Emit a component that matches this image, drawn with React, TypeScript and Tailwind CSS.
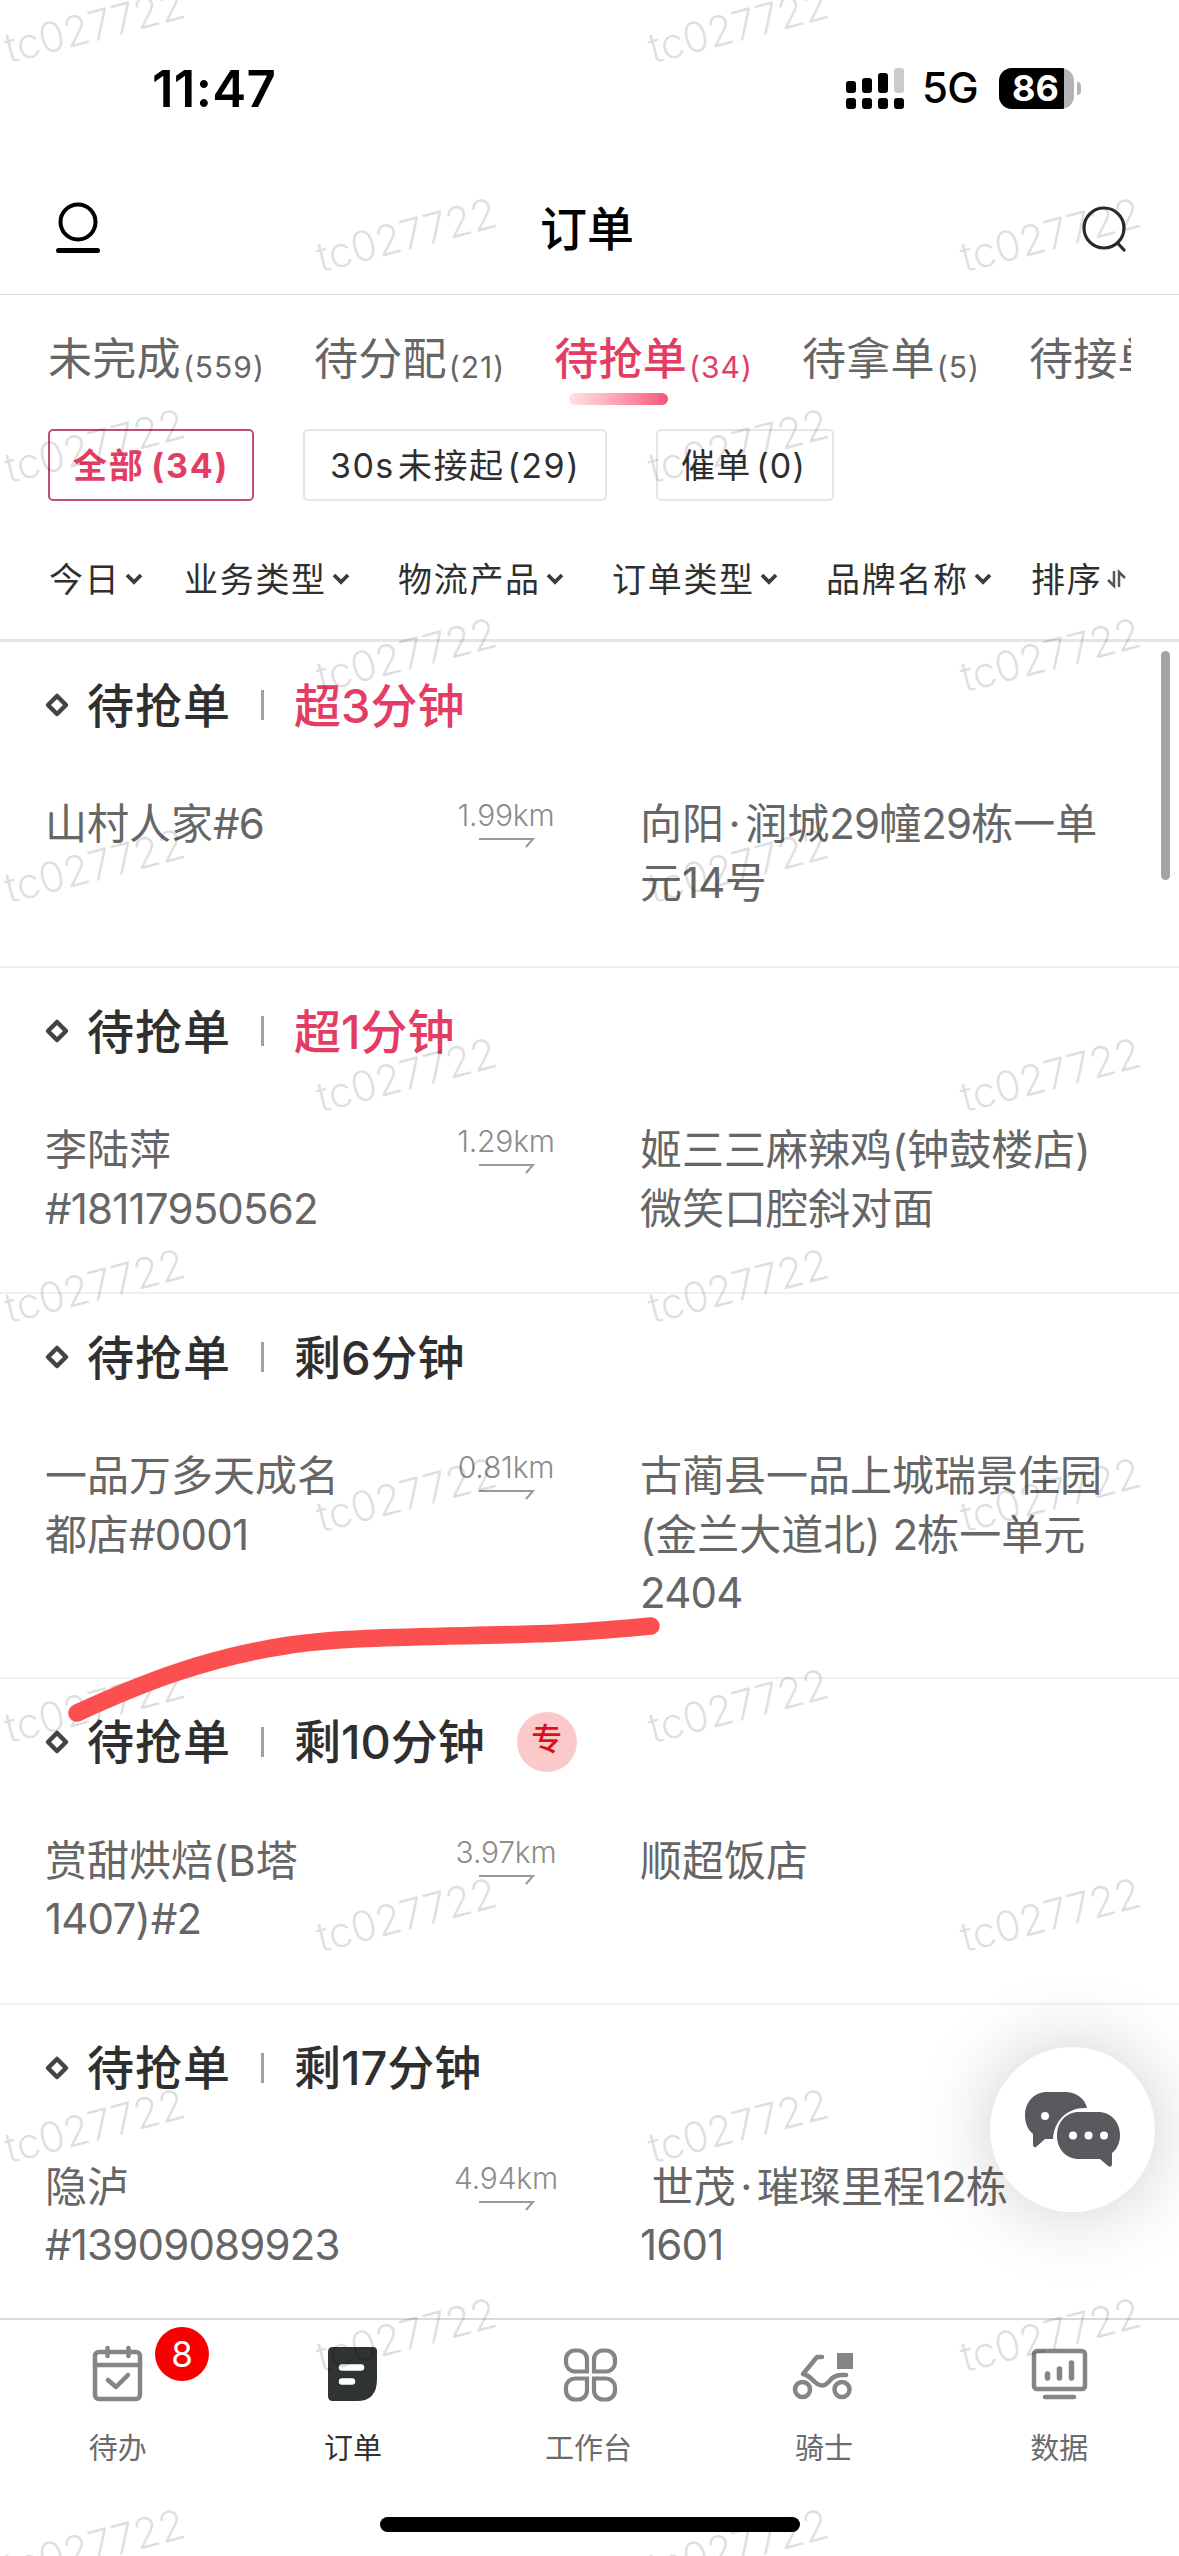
import type { ReactNode } from "react";

interface Order {
  id: number;
  time: string;
  late?: boolean;
  exclusive?: boolean;
  shop: string[];
  distance: string;
  address: string[];
}

const tabs = [
  { label: "未完成", count: 559 },
  { label: "待分配", count: 21 },
  { label: "待抢单", count: 34, active: true },
  { label: "待拿单", count: 5 },
  { label: "待接单" },
];

const filters = ["今日", "业务类型", "物流产品", "订单类型", "品牌名称"];

const orders: Order[] = [
  {
    id: 1,
    time: "超3分钟",
    late: true,
    shop: ["山村人家#6"],
    distance: "1.99km",
    address: ["向阳·润城29幢29栋一单", "元14号"],
  },
  {
    id: 2,
    time: "超1分钟",
    late: true,
    shop: ["李陆萍", "#18117950562"],
    distance: "1.29km",
    address: ["姬三三麻辣鸡(钟鼓楼店)", "微笑口腔斜对面"],
  },
  {
    id: 3,
    time: "剩6分钟",
    shop: ["一品万多天成名", "都店#0001"],
    distance: "0.81km",
    address: ["古蔺县一品上城瑞景佳园", "(金兰大道北) 2栋一单元", "2404"],
  },
  {
    id: 4,
    time: "剩10分钟",
    exclusive: true,
    shop: ["赏甜烘焙(B塔", "1407)#2"],
    distance: "3.97km",
    address: ["顺超饭店"],
  },
  {
    id: 5,
    time: "剩17分钟",
    shop: ["隐泸", "#13909089923"],
    distance: "4.94km",
    address: [" 世茂·璀璨里程12栋", "1601"],
  },
];

const watermarkRows = [0, 1, 2, 3, 4, 5, 6];

export default function App() {
  return (
    <div className="relative flex h-[2556px] w-[1179px] flex-col overflow-hidden bg-white font-['Inter','Noto_Sans_CJK_SC',sans-serif] text-[#2f2f2f]">
      <StatusBar />
      <Header />
      <Tabs />
      <Chips />
      <Filters />
      <main className="relative min-h-0 flex-1 overflow-hidden">
        {orders.map((order) => (
          <OrderCard key={order.id} order={order} />
        ))}
        <div className="absolute top-[9px] right-[9px] h-[229px] w-[9px] rounded-full bg-[#a3a3a3]" />
      </main>
      <BottomNav />
      <Watermark />
      <PenStroke />
      <ChatButton />
    </div>
  );
}

function StatusBar() {
  return (
    <div className="flex h-[176px] shrink-0 items-center justify-between pr-[98px] pl-[152px] text-black">
      <span className="text-[51px] leading-none font-semibold tracking-[0.3px]">11:47</span>
      <div className="flex items-center">
        <svg width="58" height="41" viewBox="0 0 58 41">
          <rect x="0" y="13" width="10" height="12" rx="3" />
          <rect x="16" y="10" width="10" height="15" rx="3" />
          <rect x="32" y="5" width="10" height="20" rx="3" />
          <rect x="48" y="0" width="10" height="25" rx="3" fill="#cbcbcb" />
          <rect x="0" y="30" width="10" height="11" rx="3" />
          <rect x="16" y="30" width="10" height="11" rx="3" />
          <rect x="32" y="30" width="10" height="11" rx="3" />
          <rect x="48" y="30" width="10" height="11" rx="3" />
        </svg>
        <span className="ml-[18px] w-[57px] text-[42px] leading-none font-medium tracking-[-0.8px]">5G</span>
        <div className="ml-[20px] flex h-[41px] w-[75px] items-center overflow-hidden rounded-[13px] bg-[#b4b4b4]">
          <span className="flex h-full w-[65px] items-center justify-center bg-black pl-2 text-[36px] leading-none font-bold text-white">
            86
          </span>
        </div>
        <div className="ml-[3px] h-[13px] w-[4px] rounded-r-full bg-[#b4b4b4]" />
      </div>
    </div>
  );
}

function Header() {
  return (
    <header className="flex h-[119px] shrink-0 items-center justify-between border-b-[1.5px] border-[#dcdcdc] px-[53px] pb-[14px] text-black">
      <svg width="50" height="56" viewBox="0 0 50 56" fill="none" stroke="currentColor" strokeLinecap="round">
        <circle cx="25" cy="22" r="17.500" strokeWidth="4" />
        <path d="M5.500 50.500H44.500" strokeWidth="5" />
      </svg>
      <h1 className="-ml-[9px] text-[47px] leading-none font-medium">订单</h1>
      <svg width="46" height="50" viewBox="0 0 46 50" fill="none" stroke="#2b2b2b" strokeWidth="3.200" strokeLinecap="round">
        <circle cx="24" cy="25" r="20" />
        <path d="M37.500 40L44 47" />
      </svg>
    </header>
  );
}

function Tabs() {
  return (
    <nav className="mr-[48px] ml-[48px] flex h-[134px] shrink-0 gap-[49px] overflow-hidden whitespace-nowrap">
      {tabs.map((tab) => (
        <div
          key={tab.label}
          className={`relative flex h-[110px] shrink-0 items-baseline pt-[34px] ${tab.active ? "text-[#e43d63]" : "text-[#666]"}`}
        >
          <span className={`text-[44px] leading-[60px] tracking-[0.3px] ${tab.active ? "font-medium" : ""}`}>
            {tab.label}
          </span>
          {tab.count !== undefined && (
            <span className="ml-[2px] translate-y-[3px] text-[30px] leading-none tracking-[1px]">({tab.count})</span>
          )}
          {tab.active && (
            <div className="absolute bottom-0 left-[15px] h-[12px] w-[99px] rounded-full bg-linear-to-r from-[#fde3e9] to-[#f65479]" />
          )}
        </div>
      ))}
    </nav>
  );
}

function Chips() {
  return (
    <div className="flex h-[72px] shrink-0 gap-[49px] pl-[48px] text-[34px] whitespace-nowrap">
      <button className="flex w-[206px] items-center justify-center rounded-[5px] border-2 border-[#c04f6a] font-bold tracking-[1.8px] text-[#e43d63] [word-spacing:-3px]">
        全部 (34)
      </button>
      <button className="flex w-[304px] items-center justify-center rounded-[5px] border-2 border-[#e6e6e6] tracking-[1.500px] [word-spacing:-8px]">
        30s 未接起 (29)
      </button>
      <button className="flex w-[178px] items-center justify-center rounded-[5px] border-2 border-[#e6e6e6] pr-[3px] tracking-[1.2px] [word-spacing:-6px]">
        催单 (0)
      </button>
    </div>
  );
}

function Filters() {
  return (
    <div className="grid h-[141px] shrink-0 grid-cols-[135px_214px_214px_214px_205px_auto] items-center border-b-[3px] border-[#e5e5e5] pt-[19px] pl-[49px] text-[34px] whitespace-nowrap">
      {filters.map((name) => (
        <div key={name} className="flex items-center">
          <span className="tracking-[1.7px]">{name}</span>
          <svg className="mt-[-2px] ml-[5px]" width="18" height="14" viewBox="0 0 18 14" fill="none" stroke="#3c3c3c" strokeWidth="3.800">
            <path d="M2 3L9 10L16 3" />
          </svg>
        </div>
      ))}
      <div className="flex items-center">
        <span className="tracking-[1.7px]">排序</span>
        <svg className="mt-[-2px] ml-[5px]" width="20" height="20" viewBox="0 0 20 20" fill="none" stroke="#555" strokeWidth="2.500">
          <path d="M1 11L7 17V2M12 18V3L18 9" />
        </svg>
      </div>
    </div>
  );
}

// Digits are set slightly tighter than Chinese text, the middle dot looser.
function MixedLine({ text }: { text: string }) {
  return (
    <p>
      {text.split(/([#\d]+|·)/).map((part, i) => {
        if (part === "·") {
          return (
            <span key={i} className="px-[4.500px]">
              {part}
            </span>
          );
        }
        return (
          <span key={i} className={/^[#\d]/.test(part) ? "tracking-[-0.8px]" : ""}>
            {part}
          </span>
        );
      })}
    </p>
  );
}

function OrderCard({ order }: { order: Order }) {
  return (
    <article className="border-b-2 border-[#f0f0f0] pt-[33px] pb-[54px]">
      <div className="flex h-[60px] items-center pl-[44px] text-[47px] font-medium">
        <svg width="26" height="26" viewBox="0 0 26 26" fill="none" stroke="#444" strokeWidth="4.500" strokeLinejoin="round">
          <path d="M13 4L22 13L13 22L4 13Z" />
        </svg>
        <span className="ml-[17px] leading-none tracking-[1px]">待抢单</span>
        <span className="ml-[30px] h-[30px] w-[3px] bg-[#a0a0a0]" />
        <span className={`ml-[30px] leading-none ${order.late ? "text-[#e43d63]" : ""}`}>{order.time}</span>
        {order.exclusive && (
          <span className="ml-[32px] flex size-[60px] items-center justify-center rounded-full bg-[#fcc9ca] pb-1 text-[31px] text-[#d9101a]">
            专
          </span>
        )}
      </div>
      <div className="mt-[60px] flex items-start text-[42px] leading-[58.500px] whitespace-pre text-[#666]">
        <div className="min-h-[117px] w-[380px] pl-[45px]">
          {order.shop.map((line) => (
            <MixedLine key={line} text={line} />
          ))}
        </div>
        <div className="flex w-[260px] flex-col items-center text-[30px] leading-[40px] font-light text-[#8c8c8c]">
          <span className="-ml-[8px] tracking-[-0.2px]">{order.distance}</span>
          <svg className="mt-[2px] -ml-[6px]" width="58" height="12" viewBox="0 0 58 12" fill="none" stroke="#9a9a9a" strokeWidth="2">
            <path d="M1 2H55L48 10" />
          </svg>
        </div>
        <div className="min-h-[117px]">
          {order.address.map((line) => (
            <MixedLine key={line} text={line} />
          ))}
        </div>
      </div>
    </article>
  );
}

function BottomNav() {
  return (
    <footer className="flex h-[238px] shrink-0 flex-col items-center border-t-2 border-[#dadada] bg-white">
      <div className="flex w-full pr-[2px]">
        <NavItem label="待办" badge={8}>
          <rect x="5" y="6" width="45" height="47" rx="4" />
          <path d="M5 19H50" />
          <path d="M17.500 2V10M38.500 2V10" />
          <path d="M18 34L26 41L38 29" />
        </NavItem>
        <NavItem label="订单" active>
          <path
            d="M8 1H48Q52 1 52 5V33Q52 55 32 55H8Q3 55 3 50V6Q3 1 8 1Z"
            fill="#2f3332"
            stroke="none"
          />
          <path d="M17 21.500H36M17 35.500H27" stroke="#fff" strokeWidth="6.500" />
        </NavItem>
        <NavItem label="工作台">
          <g strokeWidth="4.200" strokeLinejoin="miter">
            <path d="M26 25.500V14A9 9 0 0 0 17 4.500H14A9 9 0 0 0 5 14V17A9 9 0 0 0 14 25.500Z" />
            <path d="M33 25.500V14A9 9 0 0 1 42 4.500H45A9 9 0 0 1 54 14V17A9 9 0 0 1 45 25.500Z" />
            <path d="M26 32.500V44A9 9 0 0 1 17 53.500H14A9 9 0 0 1 5 44V41A9 9 0 0 1 14 32.500Z" />
            <path d="M33 32.500V44A9 9 0 0 0 42 53.500H45A9 9 0 0 0 54 44V41A9 9 0 0 0 45 32.500Z" />
          </g>
        </NavItem>
        <NavItem label="骑士">
          <circle cx="6.500" cy="43.500" r="7.500" />
          <circle cx="46" cy="43.500" r="7.500" />
          <path d="M26 11H21L7 28C17 30 18 39.500 26 39.500C34 39.500 33 29 46 29H50" />
          <rect x="41" y="7" width="16" height="16" fill="#858585" stroke="none" />
        </NavItem>
        <NavItem label="数据">
          <rect x="3" y="5" width="51" height="38" rx="3" />
          <path d="M14 51H43" />
          <path d="M16.500 28V32M28.500 23V32M40.500 17V32" strokeWidth="5.500" />
        </NavItem>
      </div>
      <div className="mt-[47px] h-[15px] w-[420px] rounded-full bg-black" />
    </footer>
  );
}

interface NavItemProps {
  label: string;
  active?: boolean;
  badge?: number;
  children: ReactNode;
}

function NavItem({ label, active, badge, children }: NavItemProps) {
  return (
    <div className="relative flex flex-1 flex-col items-center pt-[26px]">
      <svg
        className="overflow-visible"
        width="56"
        height="58"
        viewBox="0 0 56 58"
        fill="none"
        stroke="#858585"
        strokeWidth="4.500"
        strokeLinecap="round"
        strokeLinejoin="round"
      >
        {children}
      </svg>
      <span className={`mt-[24px] text-[29px] leading-[42px] ${active ? "text-[#2f2f2f]" : "text-[#6b6b6b]"}`}>
        {label}
      </span>
      {badge && (
        <span className="absolute top-[7px] left-[155px] flex size-[54px] items-center justify-center rounded-full bg-[#f80000] text-[35px] text-white">
          {badge}
        </span>
      )}
    </div>
  );
}

// Staggered account marks that cover the whole screen.
function Watermark() {
  return (
    <div className="pointer-events-none absolute inset-0 overflow-hidden text-[42px] leading-none font-light tracking-[-0.3px] text-black/13">
      {watermarkRows.map((row) => (
        <div key={row} className="absolute left-0 w-full" style={{ top: row * 420 }}>
          <span className="absolute top-[5px] left-[2px] -rotate-[14.500deg]">tc027722</span>
          <span className="absolute top-[5px] left-[646px] -rotate-[14.500deg]">tc027722</span>
          <span className="absolute top-[214px] left-[314px] -rotate-[14.500deg]">tc027722</span>
          <span className="absolute top-[214px] left-[958px] -rotate-[14.500deg]">tc027722</span>
        </div>
      ))}
    </div>
  );
}

function PenStroke() {
  return (
    <svg
      className="pointer-events-none absolute top-[1600px] left-[60px]"
      width="620"
      height="130"
      viewBox="60 1600 620 130"
      fill="none"
      stroke="#fc5050"
      strokeWidth="17.500"
      strokeLinecap="round"
    >
      <path d="M77 1713C140 1684 205 1658 287 1645.500C350 1635 470 1637 560 1633Q610 1630 651 1626" />
    </svg>
  );
}

function ChatButton() {
  return (
    <button className="absolute top-[2047px] right-[24px] flex size-[165px] items-center justify-center rounded-full bg-white shadow-[0_0_80px_rgba(0,0,0,0.2)]">
      <svg width="96" height="76" viewBox="0 0 96 76">
        <path
          d="M22 0H40C52 0 60 7 62 16C42 15 29 29 28 47H20L11 55Q8 56 8 52V42C3 38 0 31 0 24C0 10 9 0 22 0Z"
          fill="#5a595e"
        />
        <path
          d="M54 20H73C86 20 95 30 95 43C95 51 92 57 87 61V72Q87 76 83 74L75 67H54C41 67 32 57 32 44C32 30 41 20 54 20Z"
          fill="#5a595e"
        />
        <g fill="#fff">
          <circle cx="20" cy="24" r="4" />
          <circle cx="48" cy="43.500" r="4" />
          <circle cx="63.500" cy="43.500" r="4" />
          <circle cx="79" cy="43.500" r="4" />
        </g>
      </svg>
    </button>
  );
}
